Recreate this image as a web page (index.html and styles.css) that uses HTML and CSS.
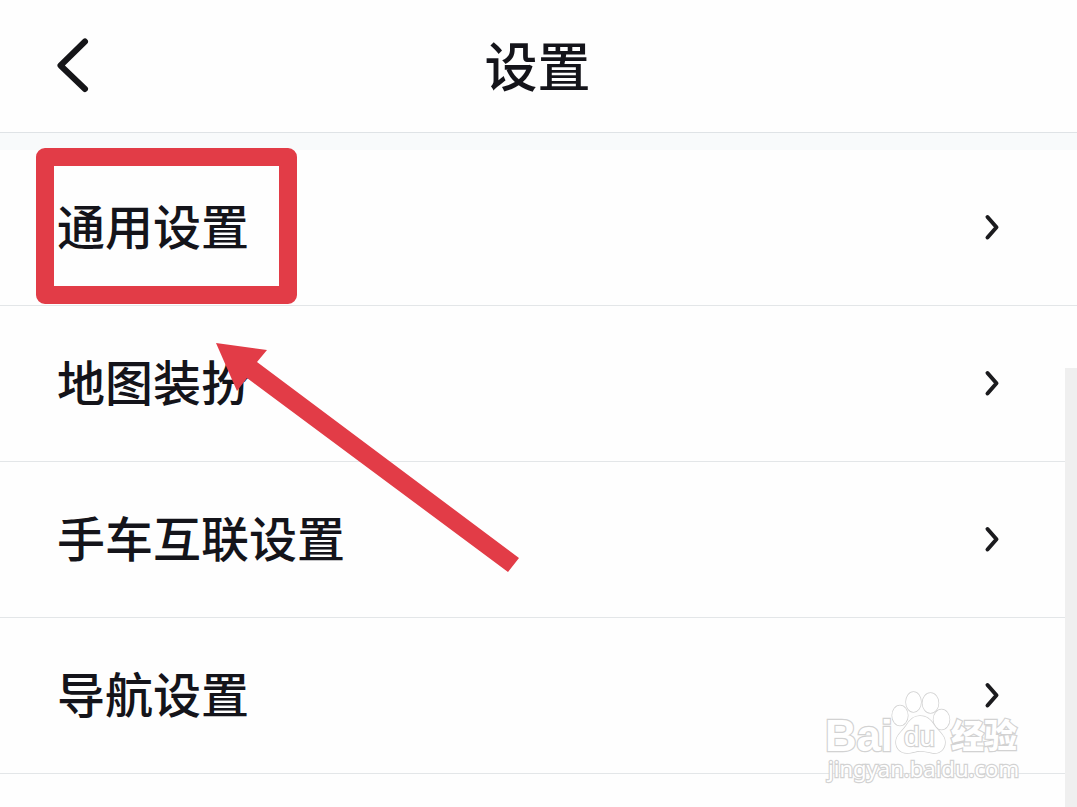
FILE: index.html
```html
<!DOCTYPE html>
<html lang="zh-CN">
<head>
    <meta charset="UTF-8">
    <meta name="viewport" content="width=device-width, initial-scale=1.0">
    <title>设置</title>
    <link rel="stylesheet" href="styles.css">
</head>
<body>

    <header class="header">
        <a class="back" aria-label="返回">
            <svg width="36" height="60" viewBox="0 0 36 60">
                <path d="M30 5.500L5.500 29.500L30 53"/>
            </svg>
        </a>
        <h1>设置</h1>
    </header>

    <main class="list">
        <div class="row">
            <span>通用设置</span>
            <svg class="arrow" width="20" height="30" viewBox="0 0 20 30"><path d="M5.500 4L14.500 14.300L5.500 24.500"/></svg>
        </div>
        <div class="row">
            <span>地图装扮</span>
            <svg class="arrow" width="20" height="30" viewBox="0 0 20 30"><path d="M5.500 4L14.500 14.300L5.500 24.500"/></svg>
        </div>
        <div class="row">
            <span>手车互联设置</span>
            <svg class="arrow" width="20" height="30" viewBox="0 0 20 30"><path d="M5.500 4L14.500 14.300L5.500 24.500"/></svg>
        </div>
        <div class="row">
            <span>导航设置</span>
            <svg class="arrow" width="20" height="30" viewBox="0 0 20 30"><path d="M5.500 4L14.500 14.300L5.500 24.500"/></svg>
        </div>
    </main>

    <div class="scrollbar"></div>
    <div class="highlight"></div>

    <svg class="pointer" width="310" height="235" viewBox="0 0 310 235">
        <path d="M6 3L57 10L47 22L309 218L298 232L37 38L27 51Z"/>
    </svg>

    <svg class="watermark" width="210" height="105" viewBox="0 0 210 105">
        <g class="logo">
            <text x="4" y="66" font-size="44" textLength="68" lengthAdjust="spacingAndGlyphs">Bai</text>
            <ellipse cx="79" cy="30.500" rx="7.800" ry="10"/>
            <ellipse cx="92.500" cy="17" rx="7.500" ry="10"/>
            <ellipse cx="109.500" cy="18" rx="8" ry="10"/>
            <ellipse cx="120.500" cy="34.500" rx="8" ry="10"/>
            <path d="M99 31C106 31 110 35 113 40C117 46 124 50 124 57C124 64 119 69 112 68C107 67 104 66 99 66C94 66 92 68 86 68C79 68 75 63 75 57C75 50 81 47 85 41C88 36 92 31 99 31Z"/>
            <text class="du" x="83" y="61" font-size="28" textLength="31" lengthAdjust="spacingAndGlyphs">du</text>
            <text class="cn" x="130" y="63" font-size="33">经验</text>
            <text class="url" x="7" y="92" font-size="22" textLength="191" lengthAdjust="spacingAndGlyphs">jingyan.baidu.com</text>
        </g>
    </svg>

</body>
</html>
```

FILE: styles.css
```css
* {
    box-sizing: border-box;
}
body {
    position: relative;
    height: 807px;
    margin: 0;
    overflow: hidden;
    background-color: #fefefe;
    color: #14141a;
    font-family: "Noto Sans CJK SC", sans-serif;
}
.header {
    display: grid;
    grid-template-columns: 111px 1fr 113px;
    align-items: center;
    height: 133px;
    border-bottom: 1px solid #dfe3e6;
}
.header h1 {
    grid-column: 2;
    margin: 0;
    padding-bottom: 5px;
    font-size: 53px;
    font-weight: 500;
    line-height: 80px;
    text-align: center;
}
.back {
    padding-left: 55px;
    line-height: 0;
}
.back path {
    fill: none;
    stroke: #151518;
    stroke-width: 6;
    stroke-linecap: round;
    stroke-linejoin: round;
}
.list {
    border-top: 17px solid #f8fafb;
}
.row {
    display: flex;
    align-items: center;
    justify-content: space-between;
    height: 156px;
    padding: 0 75px 0 57px;
    border-bottom: 1px solid #e3e6e8;
    font-size: 48px;
    font-weight: 500;
    line-height: 72px;
}
.row span {
    padding-bottom: 7px;
}
.arrow path {
    fill: none;
    stroke: #1b1b1e;
    stroke-width: 4;
    stroke-linecap: round;
    stroke-linejoin: round;
}
.scrollbar {
    position: absolute;
    top: 368px;
    right: 0;
    bottom: 0;
    width: 12px;
    background-color: #efefef;
}

/* red box and arrow over the list */
.highlight {
    position: absolute;
    top: 148px;
    left: 36px;
    width: 261px;
    height: 156px;
    border: 18px solid #e23c47;
    border-radius: 9px;
}
.pointer {
    position: absolute;
    top: 340px;
    left: 210px;
    fill: #e23c47;
}

.watermark {
    position: absolute;
    top: 685px;
    left: 821px;
}
.logo {
    fill: #fff;
    stroke: #d2d2d2;
    stroke-width: 1.5;
    font-family: "Liberation Sans", sans-serif;
    font-weight: bold;
    paint-order: stroke;
}
.logo text {
    stroke-width: 2.4;
}
.logo .du {
    font-weight: normal;
}
.logo .cn {
    font-family: "Noto Sans CJK SC", sans-serif;
    font-weight: 900;
}
.logo .url {
    font-family: "Noto Sans", sans-serif;
    font-weight: normal;
}
```
